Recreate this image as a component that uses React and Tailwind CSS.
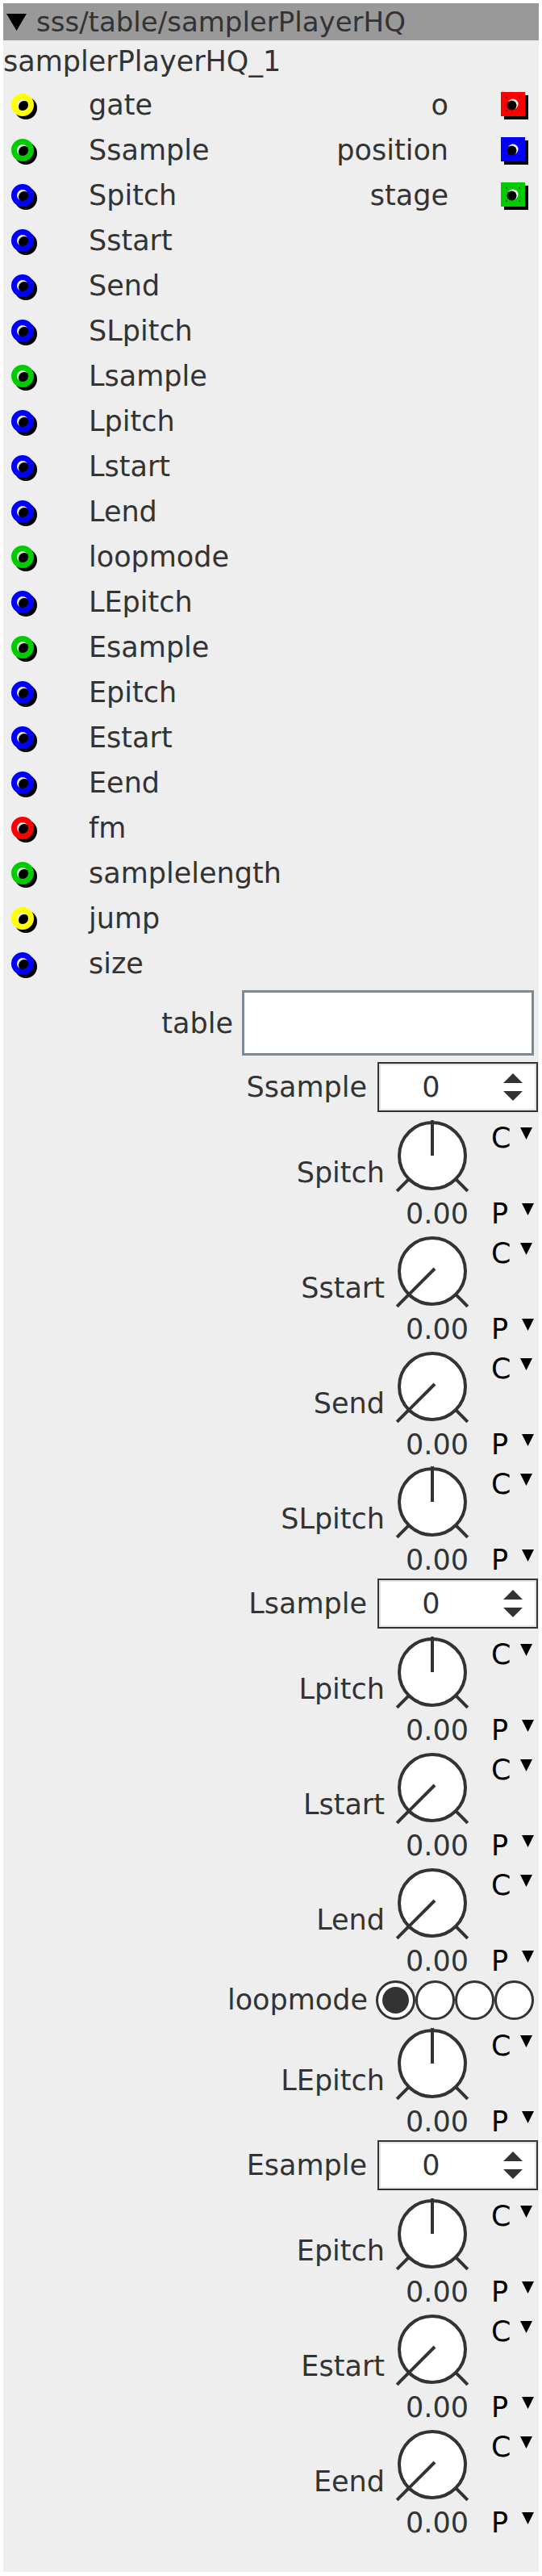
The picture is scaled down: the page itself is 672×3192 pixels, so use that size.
import React from "react";

const FONT = { fontFamily: '"DejaVu Sans", "Liberation Sans", sans-serif' };

const COLORS = {
  y: "#ffff00",
  g: "#00cc00",
  b: "#0000ff",
  r: "#ff0000",
};

const inlets = [
  ["gate", "y"],
  ["Ssample", "g"],
  ["Spitch", "b"],
  ["Sstart", "b"],
  ["Send", "b"],
  ["SLpitch", "b"],
  ["Lsample", "g"],
  ["Lpitch", "b"],
  ["Lstart", "b"],
  ["Lend", "b"],
  ["loopmode", "g"],
  ["LEpitch", "b"],
  ["Esample", "g"],
  ["Epitch", "b"],
  ["Estart", "b"],
  ["Eend", "b"],
  ["fm", "r"],
  ["samplelength", "g"],
  ["jump", "y"],
  ["size", "b"],
];

const outlets = [
  ["o", "r"],
  ["position", "b"],
  ["stage", "g"],
];

function InletIcon({ color }) {
  return (
    <svg width="40" height="40" viewBox="0 0 40 40">
      <circle cx="24" cy="24" r="14" fill="#000" />
      <circle cx="20" cy="20" r="7.5" fill="#eeeeee" />
      <circle cx="22" cy="22" r="7" fill="#000" />
      <circle cx="20" cy="20" r="10.5" fill="none" stroke={color} strokeWidth="7" />
    </svg>
  );
}

function OutletIcon({ color }) {
  return (
    <svg width="36" height="36" viewBox="0 0 36 36">
      <rect x="4" y="4" width="30" height="30" fill="#000" />
      <rect x="0" y="0" width="30" height="30" fill={color} />
      <circle cx="15" cy="15" r="6.5" fill="#fff" />
      <circle cx="13.5" cy="16.5" r="6" fill="#000" />
      <rect x="6" y="6" width="2" height="2" fill="#000" opacity="0.6" />
      <rect x="22" y="6" width="2" height="2" fill="#000" opacity="0.6" />
      <rect x="6" y="22" width="2" height="2" fill="#000" opacity="0.6" />
      <rect x="22" y="22" width="2" height="2" fill="#000" opacity="0.6" />
    </svg>
  );
}

function SmallTri() {
  return (
    <svg width="15" height="15" viewBox="0 0 15 15" className="self-start mt-[7px]">
      <polygon points="0,0 15,0 7.5,15" fill="#000" />
    </svg>
  );
}

function Knob({ label, up }) {
  const cx = 52;
  const cy = 51;
  const k = 0.7071;
  return (
    <div className="flex h-[143px]">
      <div className="flex-1 self-center text-right pr-[7px] text-[35px] leading-[40px] text-[#333]">
        {label}
      </div>
      <div className="w-[116px] flex flex-col">
        <svg width="116" height="103" viewBox="0 0 116 103">
          <circle cx={cx} cy={cy} r="41" fill="#fff" stroke="#333" strokeWidth="4" />
          <line x1={cx - 42 * k} y1={cy + 42 * k} x2={cx - 62 * k} y2={cy + 62 * k} stroke="#333" strokeWidth="4" />
          <line x1={cx + 42 * k} y1={cy + 42 * k} x2={cx + 62 * k} y2={cy + 62 * k} stroke="#333" strokeWidth="4" />
          {up ? (
            <line x1={cx} y1={cy} x2={cx} y2={cy - 44} stroke="#333" strokeWidth="4" />
          ) : (
            <line x1={cx + 3} y1={cy - 3} x2={cx - 44 * k} y2={cy + 44 * k} stroke="#333" strokeWidth="4" />
          )}
        </svg>
        <div className="h-[40px] text-center text-[35px] leading-[40px] text-[#333]">0.00</div>
      </div>
      <div className="w-[68px] flex flex-col justify-between pt-[9px] pl-[9px]">
        <div className="h-[40px] flex items-start gap-[12px] text-[35px] leading-[40px] text-black">
          <span>C</span>
          <SmallTri />
        </div>
        <div className="h-[40px] flex items-start gap-[17px] text-[35px] leading-[40px] text-black">
          <span>P</span>
          <SmallTri />
        </div>
      </div>
    </div>
  );
}

function Spin({ label }) {
  return (
    <div className="flex h-[68px] items-center justify-end">
      <div className="mr-[13px] text-[35px] leading-[40px] text-[#333]">{label}</div>
      <div className="mr-[1px] w-[199px] h-[62px] border-2 border-[#333] bg-white flex items-center">
        <div className="w-full h-full border-2 border-[#e4e4e4] flex items-center">
          <div className="flex-1 text-center text-[35px] leading-[40px] text-[#333] pr-[12px]">0</div>
          <div className="w-[54px] flex flex-col items-center gap-[10px]">
            <svg width="24" height="12" viewBox="0 0 24 12">
              <polygon points="12,0 24,12 0,12" fill="#333" />
            </svg>
            <svg width="24" height="12" viewBox="0 0 24 12">
              <polygon points="0,0 24,0 12,12" fill="#333" />
            </svg>
          </div>
        </div>
      </div>
    </div>
  );
}

export default function App() {
  return (
    <div className="bg-white w-[672px] px-[4px] pt-[4px] pb-[5px]" style={FONT}>
      <div className="bg-[#eeeeee] pb-[41px]">
        <div className="h-[46px] bg-[#999999] flex items-center">
          <svg width="25" height="21" viewBox="0 0 25 21" className="ml-[4px] mr-[12px]">
            <polygon points="0,0 25,0 12.5,21" fill="#000" />
          </svg>
          <span className="text-[34px] leading-[40px] text-[#333]">sss/table/samplerPlayerHQ</span>
        </div>
        <div className="h-[52px] flex items-center text-[35px] leading-[40px] text-[#333] pl-[0px]">
          samplerPlayerHQ_1
        </div>
        {inlets.map(([name, c], i) => (
          <div key={name} className="h-[56px] flex items-center">
            <div className="w-[106px] pl-[4px] flex items-center">
              <InletIcon color={COLORS[c]} />
            </div>
            <div className="flex-1 text-[35px] leading-[40px] text-[#333]">{name}</div>
            {outlets[i] ? (
              <div className="flex items-center">
                <div className="text-[35px] leading-[40px] text-[#333] text-right">{outlets[i][0]}</div>
                <div className="w-[65px]" />
                <div className="w-[47px] pt-[4px]">
                  <OutletIcon color={COLORS[outlets[i][1]]} />
                </div>
              </div>
            ) : null}
          </div>
        ))}
        <div className="h-[91px] flex items-center justify-end">
          <div className="mr-[11px] text-[35px] leading-[40px] text-[#333]">table</div>
          <div className="mr-[6px] w-[362px] h-[81px] bg-white border-[3px] border-[#7b8a99]" />
        </div>
        <Spin label="Ssample" />
        <Knob label="Spitch" up />
        <Knob label="Sstart" />
        <Knob label="Send" />
        <Knob label="SLpitch" up />
        <Spin label="Lsample" />
        <Knob label="Lpitch" up />
        <Knob label="Lstart" />
        <Knob label="Lend" />
        <div className="h-[56px] flex items-center justify-end">
          <div className="mr-[10px] text-[35px] leading-[40px] text-[#333]">loopmode</div>
          <div className="flex mr-[6px]">
            {[0, 1, 2, 3].map((n) => (
              <div
                key={n}
                className="w-[49px] h-[49px] rounded-full border-[3px] border-[#333] bg-white flex items-center justify-center"
              >
                {n === 0 ? <div className="w-[33px] h-[33px] rounded-full bg-[#333]" /> : null}
              </div>
            ))}
          </div>
        </div>
        <Knob label="LEpitch" up />
        <Spin label="Esample" />
        <Knob label="Epitch" up />
        <Knob label="Estart" />
        <Knob label="Eend" />
      </div>
    </div>
  );
}
